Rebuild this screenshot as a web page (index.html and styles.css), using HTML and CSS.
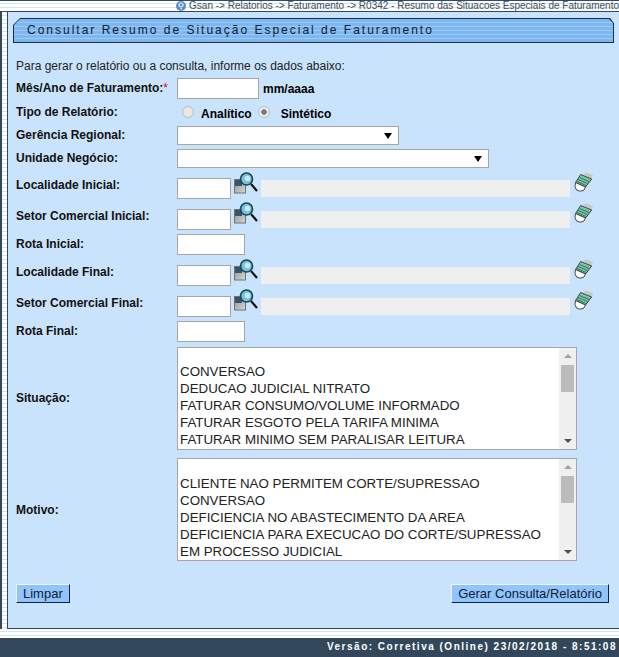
FILE: index.html
```html
<!DOCTYPE html>
<html lang="pt-BR">
<head>
    <meta charset="UTF-8">
    <title>Gsan - Resumo das Situacoes Especiais de Faturamento</title>
    <link rel="stylesheet" href="styles.css">
</head>
<body>

<div class="breadcrumb">
    <svg class="help-icon" width="10" height="10" viewBox="0 0 10 10"><circle cx="5" cy="5" r="5" fill="#5b8fc4"/><circle cx="5" cy="4" r="2" fill="none" stroke="#e4eef8" stroke-width="1.200"/><rect x="4.400" y="7" width="1.300" height="1.500" fill="#e4eef8"/></svg>
    <span>Gsan -&gt; Relatorios -&gt; Faturamento -&gt; R0342 - Resumo das Situacoes Especiais de Faturamento</span>
</div>

<div class="page">
    <div class="side"></div>
    <main class="panel">
        <div class="title-bar"><div class="title-inner">Consultar Resumo de Situação Especial de Faturamento</div></div>
        <p class="intro">Para gerar o relatório ou a consulta, informe os dados abaixo:</p>

        <div class="row row-mes">
            <label>Mês/Ano de Faturamento:<span class="req">*</span></label>
            <input type="text" class="in-mes">
            <b class="hint">mm/aaaa</b>
        </div>
        <div class="row row-tipo">
            <label>Tipo de Relatório:</label>
            <span class="radios">
                <span class="radio"></span><b>Analítico</b>
                <span class="radio checked"></span><b class="second">Sintético</b>
            </span>
        </div>
        <div class="row row-ger">
            <label>Gerência Regional:</label>
            <div class="select sel-ger"><i></i></div>
        </div>
        <div class="row row-uni">
            <label>Unidade Negócio:</label>
            <div class="select sel-uni"><i></i></div>
        </div>
        <div class="row row-cod row-loc">
            <label>Localidade Inicial:</label>
            <input type="text" class="in-cod">
            <svg class="lupa" width="24" height="22" viewBox="0 0 24 22"><use href="#lupa"/></svg>
            <div class="desc"></div>
            <svg class="borracha" width="20" height="22" viewBox="0 0 20 22"><use href="#borracha"/></svg>
        </div>
        <div class="row row-cod">
            <label>Setor Comercial Inicial:</label>
            <input type="text" class="in-cod">
            <svg class="lupa" width="24" height="22" viewBox="0 0 24 22"><use href="#lupa"/></svg>
            <div class="desc"></div>
            <svg class="borracha" width="20" height="22" viewBox="0 0 20 22"><use href="#borracha"/></svg>
        </div>
        <div class="row row-rota">
            <label>Rota Inicial:</label>
            <input type="text" class="in-rota">
        </div>
        <div class="row row-cod row-loc">
            <label>Localidade Final:</label>
            <input type="text" class="in-cod">
            <svg class="lupa" width="24" height="22" viewBox="0 0 24 22"><use href="#lupa"/></svg>
            <div class="desc"></div>
            <svg class="borracha" width="20" height="22" viewBox="0 0 20 22"><use href="#borracha"/></svg>
        </div>
        <div class="row row-cod">
            <label>Setor Comercial Final:</label>
            <input type="text" class="in-cod">
            <svg class="lupa" width="24" height="22" viewBox="0 0 24 22"><use href="#lupa"/></svg>
            <div class="desc"></div>
            <svg class="borracha" width="20" height="22" viewBox="0 0 20 22"><use href="#borracha"/></svg>
        </div>
        <div class="row row-rota">
            <label>Rota Final:</label>
            <input type="text" class="in-rota">
        </div>
        <div class="row row-list row-situacao">
            <label>Situação:</label>
            <div class="listbox">
                <ul>
                    <li>&nbsp;</li>
                    <li>CONVERSAO</li>
                    <li>DEDUCAO JUDICIAL NITRATO</li>
                    <li>FATURAR CONSUMO/VOLUME INFORMADO</li>
                    <li>FATURAR ESGOTO PELA TARIFA MINIMA</li>
                    <li>FATURAR MINIMO SEM PARALISAR LEITURA</li>
                </ul>
                <div class="scroll"><i class="up"></i><i class="thumb"></i><i class="down"></i></div>
            </div>
        </div>
        <div class="row row-list row-motivo">
            <label>Motivo:</label>
            <div class="listbox">
                <ul>
                    <li>&nbsp;</li>
                    <li>CLIENTE NAO PERMITEM CORTE/SUPRESSAO</li>
                    <li>CONVERSAO</li>
                    <li>DEFICIENCIA NO ABASTECIMENTO DA AREA</li>
                    <li>DEFICIENCIA PARA EXECUCAO DO CORTE/SUPRESSAO</li>
                    <li>EM PROCESSO JUDICIAL</li>
                </ul>
                <div class="scroll"><i class="up"></i><i class="thumb"></i><i class="down"></i></div>
            </div>
        </div>
        <div class="actions">
            <button type="button">Limpar</button>
            <button type="button">Gerar Consulta/Relatório</button>
        </div>
    </main>
</div>

<footer>Versão: Corretiva (Online) 23/02/2018 - 8:51:08</footer>

<svg width="0" height="0" class="defs">
    <defs>
        <linearGradient id="folha" x1="0" y1="0" x2="1" y2="1">
            <stop offset="0" stop-color="#8d9296"/>
            <stop offset="1" stop-color="#d8d8d2"/>
        </linearGradient>
        <g id="lupa">
            <rect x="0.500" y="7.500" width="11" height="13.500" fill="url(#folha)" stroke="#6d7478"/>
            <path d="M1 8 H8 V14 H1 Z" fill="#3b5364"/>
            <line x1="17" y1="12" x2="23" y2="19" stroke="#111" stroke-width="2.200"/>
            <circle cx="12.500" cy="7" r="6" fill="#7cc0d8" stroke="#0f4a5c" stroke-width="1.700"/>
            <circle cx="13.500" cy="6.500" r="2.800" fill="#c9e9f2"/>
        </g>
        <g id="borracha">
            <path d="M9 2 L12 0.500 L19 3 L17.700 7 Z" fill="#c8c9c6"/>
            <path d="M6.700 2.500 L17.700 7 L11.500 15 L1.500 10.500 Z" fill="#7cc4a5" stroke="#3b4a44"/>
            <path d="M5.500 5.500 L15 9.500 M4 7.500 L13.500 11.500 M3 9.500 L12 13.500" stroke="#2f7a5c"/>
            <path d="M1.500 10.500 L11.500 15 L9.500 18.500 Q5.500 20 2.500 18 Q0 15 1.500 10.500 Z" fill="#fff" stroke="#444"/>
        </g>
    </defs>
</svg>

</body>
</html>
```
FILE: styles.css
```css
* {
    box-sizing: border-box;
}

html, body {
    margin: 0;
    height: 657px;
    overflow: hidden;
}

body {
    font-family: "Liberation Sans", Arial, sans-serif;
    font-size: 12px;
    color: #000;
    background: repeating-linear-gradient(to bottom, #fff 0, #fff 3px, #d3e4f3 3px, #d3e4f3 4px);
    display: flex;
    flex-direction: column;
}

.breadcrumb {
    height: 11px;
    border-top: 1px solid #34495e;
    display: flex;
    justify-content: flex-end;
    align-items: center;
    gap: 3px;
    font-size: 10px;
    line-height: 10px;
    color: #3c4c5c;
    white-space: nowrap;
}

.help-icon {
    flex: none;
}

.page {
    display: flex;
    height: 618px;
}

.side {
    width: 7px;
    border-left: 2px solid #33475b;
    border-top: 1px solid #33475b;
}

.panel {
    flex: 1;
    background: #cae3fd;
    border-left: 1px solid #33475b;
    border-top: 1px solid #33475b;
    border-bottom: 1px solid #33475b;
    padding: 6px 0 0 5px;
}

.title-bar {
    height: 25px;
    width: 601px;
    padding: 1px;
    background: #1c2f44;
    clip-path: polygon(7px 0, calc(100% - 4px) 0, 100% 5px, 100% 100%, 0 100%, 0 7px);
}

.title-inner {
    height: 23px;
    background: repeating-linear-gradient(to bottom, #7db7f2 0, #7db7f2 3px, #a0caf6 3px, #a0caf6 4px);
    clip-path: polygon(6px 0, calc(100% - 4px) 0, 100% 4px, 100% 100%, 0 100%, 0 6px);
    font-size: 12px;
    letter-spacing: 2px;
    line-height: 23px;
    padding-left: 13px;
    color: #10202f;
}

.intro {
    margin: 16px 0 0;
    line-height: 14px;
    padding-left: 3px;
    color: #222;
}

.row {
    display: flex;
    align-items: center;
    padding-left: 3px;
}

.row label {
    width: 161px;
    flex: none;
    font-weight: bold;
    color: #111;
}

.req {
    color: #e00;
    font-weight: normal;
}

input[type="text"] {
    height: 21px;
    background: #fff;
    border: 1px solid #a6a6a6;
    padding: 0;
    margin: 0;
}

.row-mes {
    margin-top: 5px;
    height: 21px;
}

.row-mes label {
    margin-bottom: 2px;
}

.in-mes {
    width: 82px;
}

.hint {
    margin-left: 4px;
    font-weight: bold;
}

.row-tipo {
    height: 20px;
    margin-top: 2px;
}

.row-tipo label {
    margin-top: 2px;
}

.radios {
    display: flex;
    align-items: center;
    padding-left: 5px;
    margin-top: 2px;
}

.radios b {
    margin-left: 7px;
    margin-right: 6px;
    padding-top: 3px;
}

.radios b.second {
    margin-left: 11px;
}

.radio {
    width: 12px;
    height: 12px;
    border-radius: 50%;
    border: 1px solid #bbb;
    background: #e8e8e8;
}

.radio.checked {
    background: radial-gradient(circle, #777 0, #777 2.500px, #eee 3px);
}

.row-ger {
    height: 20px;
    margin-top: 4px;
}

.row-uni {
    height: 20px;
    margin-top: 3px;
}

.select {
    height: 19px;
    background: #fff;
    border: 1px solid #a6a6a6;
    position: relative;
}

.select i {
    position: absolute;
    right: 6px;
    top: 6px;
    border: 4px solid transparent;
    border-top: 6px solid #000;
    border-bottom: 0;
}

.sel-ger {
    width: 222px;
}

.sel-uni {
    width: 312px;
}

.row-cod {
    height: 21px;
    margin-top: 10px;
}

.row-cod label {
    margin-bottom: 7px;
}

.in-cod {
    width: 54px;
}

.lupa {
    flex: none;
    align-self: flex-start;
    margin: -7px 0 0 3px;
}

.row-loc .lupa {
    margin-top: -6px;
}

.desc {
    width: 309px;
    height: 17px;
    background: #efefef;
    margin-left: 3px;
}

.borracha {
    flex: none;
    align-self: flex-start;
    margin: -6px 0 0 4px;
}

.row-rota {
    height: 21px;
    margin-top: 4px;
}

.row-rota label {
    margin-bottom: 1px;
}

.in-rota {
    width: 68px;
}

.row-list {
    height: 103px;
}

.row-situacao {
    margin-top: 5px;
}

.row-situacao label {
    margin-bottom: 1px;
}

.row-motivo {
    margin-top: 8px;
}

.listbox {
    width: 400px;
    height: 103px;
    background: #fff;
    border: 1px solid #a6a6a6;
    display: flex;
    overflow: hidden;
}

.listbox ul {
    flex: 1;
    list-style: none;
    margin: -2px 0 0;
    padding: 0 0 0 2px;
    font-size: 13.330px;
    line-height: 17px;
    color: #222;
    white-space: nowrap;
}

.row-motivo ul {
    margin-top: -1px;
}

.scroll {
    width: 17px;
    background: #f0f0f0;
    position: relative;
}

.scroll i {
    position: absolute;
}

.up {
    top: 6px;
    left: 5px;
    border: 4px solid transparent;
    border-bottom: 4px solid #a3a3a3;
    border-top: 0;
}

.down {
    bottom: 6px;
    left: 5px;
    border: 4px solid transparent;
    border-top: 4px solid #505050;
    border-bottom: 0;
}

.thumb {
    top: 17px;
    left: 2px;
    width: 13px;
    height: 27px;
    background: #bcbcbc;
}

.actions {
    display: flex;
    justify-content: space-between;
    margin-top: 23px;
    padding-left: 3px;
    width: 596px;
}

.actions button {
    height: 19px;
    padding: 0 6px;
    font-family: "Liberation Sans", Arial, sans-serif;
    font-size: 13px;
    line-height: 17px;
    color: #10202f;
    background: #90c4fb;
    border: 1px solid;
    border-color: #eaf4ff #10204f #10204f #eaf4ff;
}

footer {
    height: 19px;
    margin-top: 9px;
    background: #33475b;
    color: #fff;
    font-size: 10px;
    font-weight: bold;
    letter-spacing: 1.500px;
    line-height: 17px;
    text-align: right;
    padding-right: 2px;
    white-space: nowrap;
}

.defs {
    position: absolute;
}
```
